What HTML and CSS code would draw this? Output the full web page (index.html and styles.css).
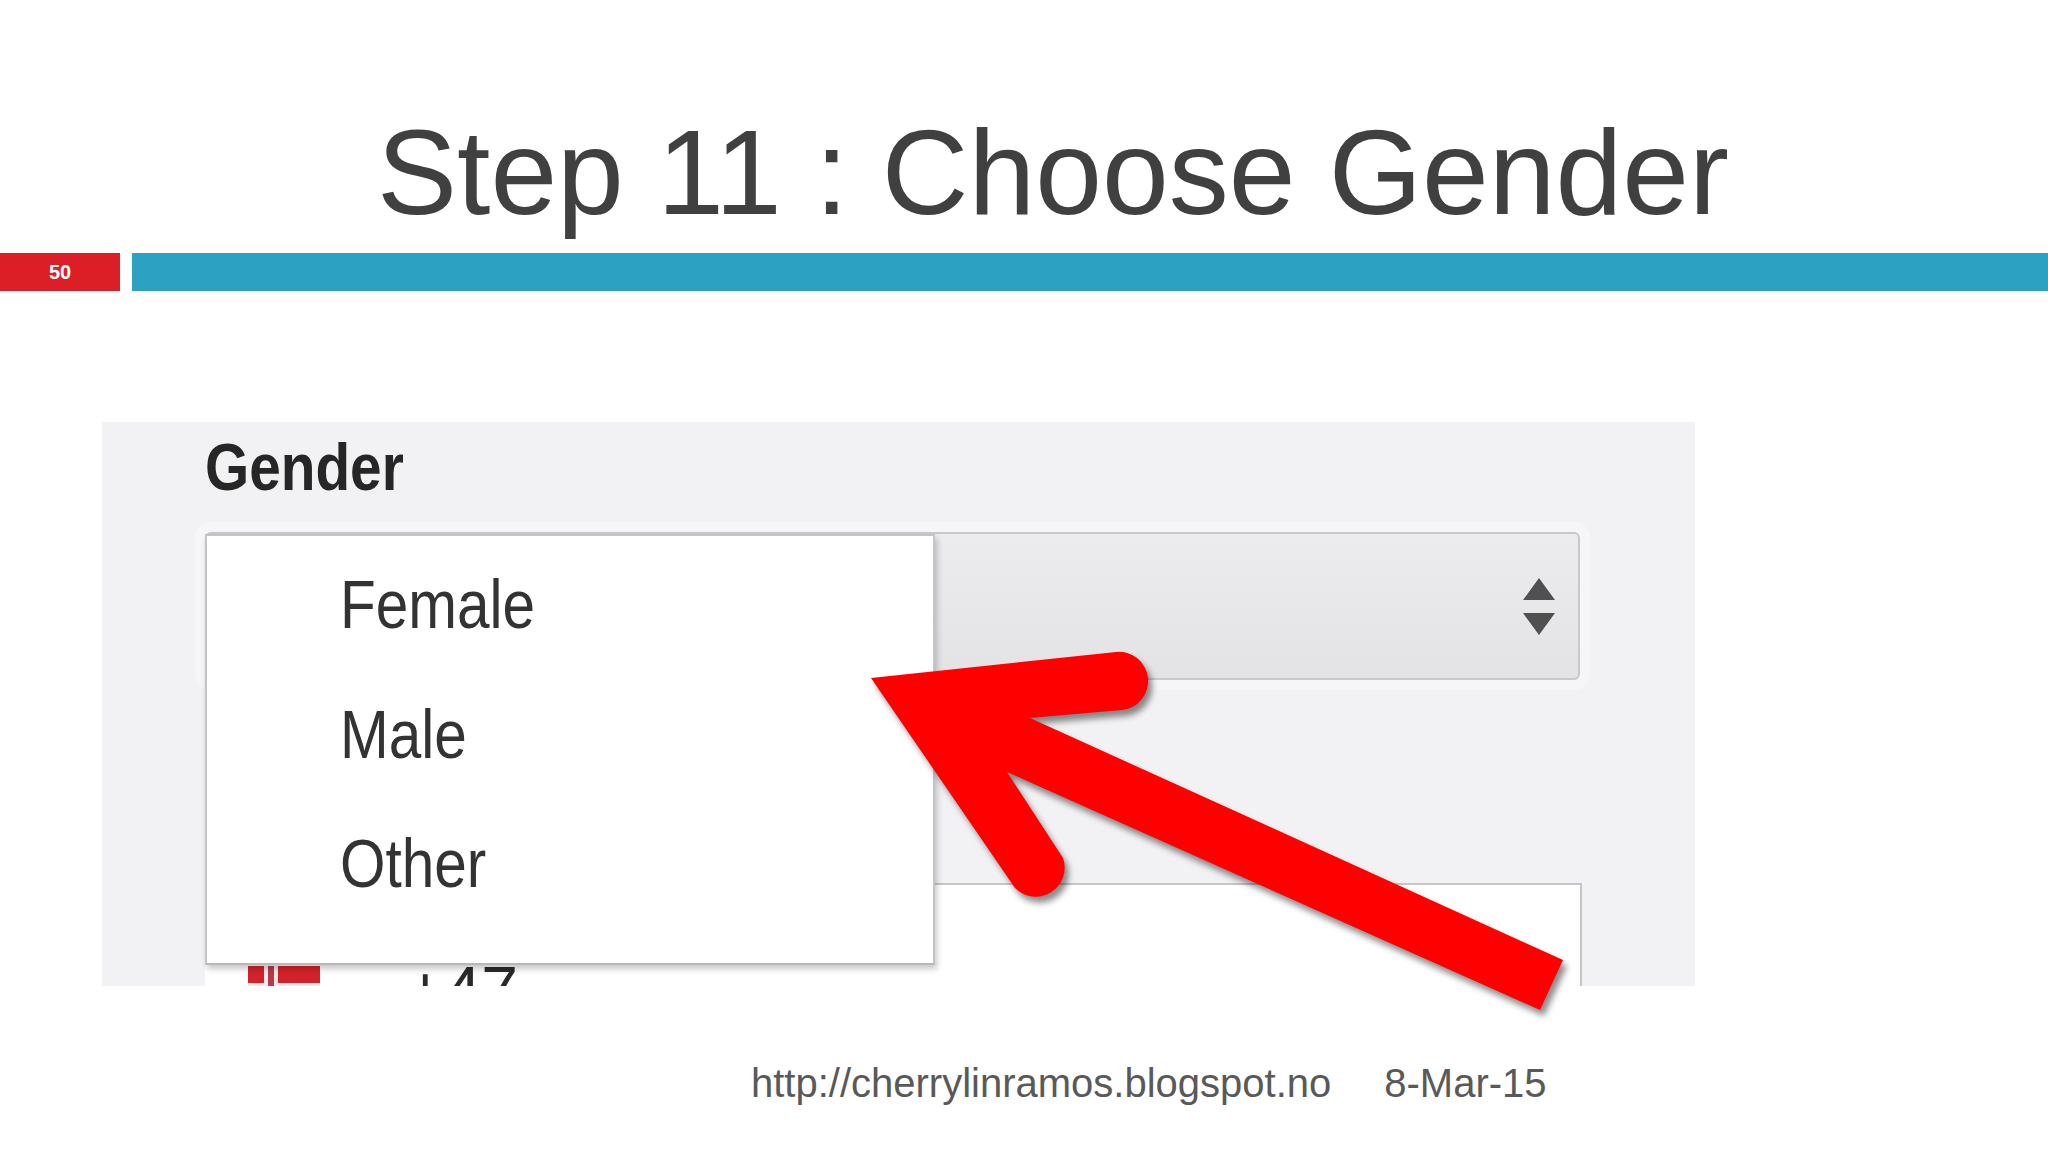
FILE: index.html
```html
<!DOCTYPE html>
<html lang="en">
<head>
<meta charset="utf-8">
<title>Step 11 : Choose Gender</title>
<link rel="stylesheet" href="styles.css">
</head>
<body>
<div class="slide">
  <h1 class="title">Step 11 : Choose Gender</h1>
  <div class="rule">
    <div class="num">50</div>
    <div class="bar"></div>
  </div>

  <div class="shot">
    <div class="label"><span>Gender</span></div>
    <div class="select">
      <div class="spinner"><i class="up"></i><i class="down"></i></div>
    </div>
    <div class="phone">
      <svg class="flag" viewBox="0 0 72 48" width="72" height="48">
        <rect width="72" height="48" fill="#d3222b"/>
        <rect x="16" width="14" height="48" fill="#f4e8ea"/>
        <rect y="17" width="72" height="14" fill="#f4e8ea"/>
        <rect x="20" width="6" height="48" fill="#b73a4a"/>
        <rect y="21" width="72" height="6" fill="#b73a4a"/>
      </svg>
      <span class="code">+47</span>
    </div>
    <ul class="menu">
      <li>Female</li>
      <li>Male</li>
      <li>Other</li>
    </ul>
  </div>

  <div class="footer">
    <span>http://cherrylinramos.blogspot.no</span>
    <span>8-Mar-15</span>
  </div>

  <svg class="arrow" viewBox="0 0 2048 1152" width="2048" height="1152">
    <path class="arrow-shape" d="M 871 678 L 1116 652 A 29 29 0 0 1 1122 710 L 1030 718 L 1563 960 L 1540 1010 L 1007 772 L 1063 858 A 29 29 0 0 1 1015 888 Z"/>
  </svg>
</div>
</body>
</html>
```

FILE: styles.css
```css
html, body {
  margin: 0;
  padding: 0;
  background: #ffffff;
}

.slide {
  position: relative;
  width: 2048px;
  height: 1152px;
  overflow: hidden;
  background: #ffffff;
  font-family: "Liberation Sans", Arial, sans-serif;
}

.title {
  margin: 112px 0 0 0;
  padding-left: 377px;
  font-size: 120px;
  line-height: 120px;
  font-weight: normal;
  color: #404040;
  white-space: nowrap;
}

.rule {
  display: flex;
  gap: 12px;
  margin-top: 21px;
  height: 38px;
}

.num {
  width: 120px;
  background: #dc1f27;
  color: #ffffff;
  font-weight: bold;
  font-size: 20px;
  line-height: 38px;
  text-align: center;
}

.bar {
  flex: 1;
  background: #2ca1c1;
}

.shot {
  position: relative;
  box-sizing: border-box;
  margin: 131px 0 0 102px;
  width: 1593px;
  height: 564px;
  padding: 12px 0 0 103px;
  background: #f2f2f4;
  overflow: hidden;
}

.label {
  font-size: 66px;
  line-height: 66px;
  font-weight: bold;
  color: #262626;
  height: 66px;
}

.label span {
  display: inline-block;
  transform: scaleX(0.86);
  transform-origin: left center;
}

.select {
  box-sizing: border-box;
  margin-top: 32px;
  width: 1375px;
  height: 148px;
  border: 2px solid #c9c9cb;
  border-radius: 6px;
  background: linear-gradient(#ececee, #e3e3e5);
  box-shadow: 0 0 0 10px rgba(255, 255, 255, 0.35);
  display: flex;
  justify-content: flex-end;
  align-items: center;
  padding-right: 23px;
}

.spinner {
  display: flex;
  flex-direction: column;
  align-items: center;
  gap: 13px;
}

.spinner i {
  display: block;
  width: 0;
  height: 0;
  border-left: 16px solid transparent;
  border-right: 16px solid transparent;
}

.spinner .up {
  border-bottom: 22px solid #505050;
}

.spinner .down {
  border-top: 22px solid #505050;
}

.phone {
  box-sizing: border-box;
  margin-top: 203px;
  width: 1377px;
  height: 200px;
  background: #ffffff;
  border-top: 2px solid #c6c6c8;
  border-right: 2px solid #c6c6c8;
  display: flex;
  align-items: flex-start;
}

.flag {
  display: block;
  margin: 81px 0 0 43px;
}

.code {
  margin: 72px 0 0 86px;
  font-size: 66px;
  line-height: 66px;
  color: #2a2a2a;
}

.menu {
  position: absolute;
  left: 103px;
  top: 112px;
  box-sizing: border-box;
  width: 730px;
  height: 431px;
  margin: 0;
  padding: 4px 0 0 133px;
  list-style: none;
  background: #ffffff;
  border: 2px solid #c4c4c6;
  border-bottom-color: #b8b8ba;
  box-shadow: 2px 4px 6px rgba(0, 0, 0, 0.22);
}

.menu li {
  font-size: 68px;
  line-height: 129.5px;
  height: 129.5px;
  color: #333333;
  transform: scaleX(0.86);
  transform-origin: left center;
  white-space: nowrap;
}

.footer {
  display: flex;
  gap: 53px;
  margin-top: 77px;
  padding-left: 751px;
  font-size: 40px;
  line-height: 40px;
  color: #595959;
  white-space: nowrap;
}

.arrow {
  position: absolute;
  left: 0;
  top: 0;
  pointer-events: none;
}

.arrow-shape {
  fill: #fe0000;
  filter: drop-shadow(4px 6px 3px rgba(0, 0, 0, 0.45));
}
```
